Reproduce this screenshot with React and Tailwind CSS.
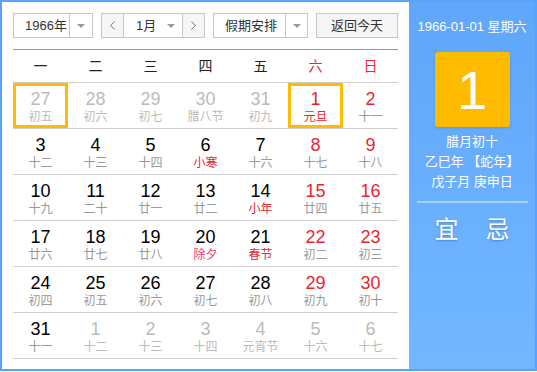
import React from 'react';
import { ChevronLeft, ChevronRight } from 'lucide-react';

const RED = 'text-[#e8262e]';

// [day, lunar, type]  type: o = other month, w = weekend, f = festival(red lunar), p = 除夕
const rows = [
  [['27','初五','o'],['28','初六','o'],['29','初七','o'],['30','腊八节','o'],['31','初九','o'],['1','元旦','wf'],['2','十一','w']],
  [['3','十二'],['4','十三'],['5','十四'],['6','小寒','f'],['7','十六'],['8','十七','w'],['9','十八','w']],
  [['10','十九'],['11','二十'],['12','廿一'],['13','廿二'],['14','小年','f'],['15','廿四','w'],['16','廿五','w']],
  [['17','廿六'],['18','廿七'],['19','廿八'],['20','除夕','p'],['21','春节','f'],['22','初二','w'],['23','初三','w']],
  [['24','初四'],['25','初五'],['26','初六'],['27','初七'],['28','初八'],['29','初九','w'],['30','初十','w']],
  [['31','十一'],['1','十二','o'],['2','十三','o'],['3','十四','o'],['4','元宵节','o'],['5','十六','o'],['6','十七','o']],
];

function Caret() {
  return <span className="inline-block w-0 h-0 border-l-[4px] border-r-[4px] border-t-[4px] border-l-transparent border-r-transparent border-t-[#999]" />;
}

function Select({ label, w, textW }) {
  return (
    <div className={"h-[25px] flex border border-[#c6c6c6] bg-white " + w}>
      <div className={"flex items-center pl-[11px] " + textW}>{label}</div>
      <div className="flex-1 flex items-center justify-center border-l border-[#c6c6c6]"><Caret /></div>
    </div>
  );
}

function Cell({ d }) {
  const [day, lunar, t = ''] = d;
  const other = t.includes('o');
  let numCls = 'text-black';
  if (other) numCls = 'text-[#bbb]';
  else if (t.includes('w')) numCls = RED;
  let lunCls = 'text-[#999]';
  if (other) lunCls = 'text-[#bbb]';
  if (t.includes('f')) lunCls = RED;
  if (t.includes('p')) lunCls = 'text-[#ec3d6c]';
  const boxed = (day === '27' && lunar === '初五') || lunar === '元旦';
  return (
    <div className="relative h-[46px] border-b border-[#cfcfcf] flex flex-col items-center pt-[6px]">
      <div className={"text-[18px] leading-[20px] " + numCls}>{day}</div>
      <div className={"text-[12px] leading-[16px] " + lunCls}>{lunar}</div>
      {boxed && <div className="absolute inset-0 border-[3px] border-[#ffbb00]" />}
    </div>
  );
}

export default function App() {
  return (
    <div className="w-[537px] h-[371px] border-2 border-[#58a2f9] bg-white flex text-[13px] text-[#333] font-['Liberation_Sans','Noto_Sans_CJK_SC',sans-serif]">
      <div className="w-[407px] px-[11px] pt-[11px]">
        <div className="flex justify-between">
          <Select label="1966年" w="w-[80px]" textW="w-[55px]" />
          <div className="h-[25px] w-[104px] flex border border-[#c6c6c6]">
            <div className="w-[22px] flex items-center justify-center bg-[#f6f6f6] border-r border-[#c6c6c6] text-[#555]"><ChevronLeft size={15} strokeWidth={1.3} /></div>
            <div className="flex-1 flex items-center justify-between pl-[12px] pr-[7px] bg-white">1月<Caret /></div>
            <div className="w-[22px] flex items-center justify-center bg-[#f6f6f6] border-l border-[#c6c6c6] text-[#555]"><ChevronRight size={15} strokeWidth={1.3} /></div>
          </div>
          <Select label="假期安排" w="w-[95px]" textW="w-[71px]" />
          <div className="h-[25px] w-[82px] flex items-center justify-center border border-[#c6c6c6] bg-[#f6f6f6]">返回今天</div>
        </div>
        <div className="mt-[11px] h-px bg-[#58a2f9]" />
        <div className="grid grid-cols-7 h-[33px] border-b border-[#cfcfcf] text-[14px] items-center text-center">
          {['一','二','三','四','五'].map(w => <div key={w} className="text-[#222]">{w}</div>)}
          <div className={RED}>六</div>
          <div className={RED}>日</div>
        </div>
        {rows.map((r, i) => (
          <div key={i} className="grid grid-cols-7">
            {r.map((d, j) => <Cell key={j} d={d} />)}
          </div>
        ))}
      </div>
      <div className="flex-1 bg-gradient-to-b from-[#60a6fa] to-[#72b7ff] text-white flex flex-col items-center">
        <div className="mt-[15px] leading-[20px]">1966-01-01 星期六</div>
        <div className="mt-[15px] w-[75px] h-[75px] rounded-[3px] bg-[#ffbb00] shadow-[0_1px_3px_rgba(0,0,0,0.15)] flex items-center justify-center text-[54px] leading-none">1</div>
        <div className="mt-[5px] leading-[20px] text-center">
          <div>腊月初十</div>
          <div>乙巳年 【蛇年】</div>
          <div>戊子月 庚申日</div>
        </div>
        <div className="mt-[9px] w-[111px] h-[2px] bg-white/40" />
        <div className="mt-[12px] w-full flex justify-around px-[12px] text-[24px] leading-[30px] [text-shadow:0_1px_2px_rgba(0,0,0,0.25)]">
          <span>宜</span>
          <span>忌</span>
        </div>
      </div>
    </div>
  );
}
